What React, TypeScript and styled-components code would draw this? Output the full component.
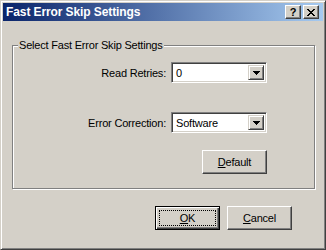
import React from 'react'
import styled, { createGlobalStyle } from 'styled-components'

const GlobalStyle = createGlobalStyle`
  html, body {
    margin: 0;
    padding: 0;
    background: #d4d0c8;
  }
  body {
    font-family: "Liberation Sans", Arial, sans-serif;
    font-size: 11px;
    letter-spacing: -0.2px;
    color: #000;
  }
`

const CLOSE_GLYPH = [
  'XX....XX',
  '.XX..XX.',
  '..XXXX..',
  '...XX...',
  '..XXXX..',
  '.XX..XX.',
  'XX....XX',
]

const CloseIcon: React.FC = () => (
  <svg width="8" height="7" viewBox="0 0 8 7" shapeRendering="crispEdges">
    { CLOSE_GLYPH.map((row, y) =>
      row.split('').map((c, x) =>
        c === 'X' ? <rect key={ `${x}-${y}` } x={ x } y={ y } width="1" height="1" fill="#000" /> : null
      )
    ) }
  </svg>
)

const ArrowIcon: React.FC = () => (
  <svg width="7" height="4" viewBox="0 0 7 4" shapeRendering="crispEdges">
    <rect x="0" y="0" width="7" height="1" fill="#000" />
    <rect x="1" y="1" width="5" height="1" fill="#000" />
    <rect x="2" y="2" width="3" height="1" fill="#000" />
    <rect x="3" y="3" width="1" height="1" fill="#000" />
  </svg>
)

const ComboBox: React.FC<{ value: string }> = ({ value }) => (
  <Combo>
    <ComboText>{ value }</ComboText>
    <DropButton>
      <ArrowIcon />
    </DropButton>
  </Combo>
)

const App: React.FC = () => {
  return (
    <>
      <GlobalStyle />
      <Window>
        <TitleBar>
          <Title>Fast Error Skip Settings</Title>
          <CaptionButton>
            <HelpGlyph>?</HelpGlyph>
          </CaptionButton>
          <CaptionButton $gap={ 2 }>
            <CloseIcon />
          </CaptionButton>
        </TitleBar>
        <Client>
          <GroupBox>
            <Legend>Select Fast Error Skip Settings</Legend>
            <Field $top={ 0 }>
              <Label>Read Retries:</Label>
              <ComboBox value="0" />
            </Field>
            <Field $top={ 29 }>
              <Label>Error Correction:</Label>
              <ComboBox value="Software" />
            </Field>
            <DefaultRow>
              <PushButton><u>D</u>efault</PushButton>
            </DefaultRow>
          </GroupBox>
          <ButtonRow>
            <PushButton $default>
              <FocusRing />
              <u>O</u>K
            </PushButton>
            <PushButton><u>C</u>ancel</PushButton>
          </ButtonRow>
        </Client>
      </Window>
    </>
  )
}

const Window = styled.div`
  box-sizing: border-box;
  width: 326px;
  height: 250px;
  display: flex;
  flex-direction: column;
  padding: 2px;
  background: #d4d0c8;
  border: 1px solid;
  border-color: #d4d0c8 #404040 #404040 #d4d0c8;
  box-shadow: inset 1px 1px 0 #fff, inset -1px -1px 0 #808080;
`

const TitleBar = styled.div`
  height: 18px;
  flex-shrink: 0;
  display: flex;
  align-items: center;
  padding: 0 4px 0 3px;
  background: linear-gradient(to right, #0a246a, #a6caf0);
`

const Title = styled.div`
  flex: 1;
  color: #fff;
  font-weight: bold;
  font-size: 12px;
  letter-spacing: -0.1px;
  white-space: nowrap;
`

const CaptionButton = styled.div<{ $gap?: number }>`
  box-sizing: border-box;
  width: 16px;
  height: 14px;
  margin-left: ${ p => p.$gap ?? 0 }px;
  display: flex;
  align-items: center;
  justify-content: center;
  background: #d4d0c8;
  border: 1px solid;
  border-color: #fff #404040 #404040 #fff;
  box-shadow: inset -1px -1px 0 #808080;
`

const HelpGlyph = styled.span`
  font-weight: bold;
  font-size: 11px;
  line-height: 11px;
  margin-top: 1px;
`

const Client = styled.div`
  flex: 1;
  display: flex;
  flex-direction: column;
  padding: 24px 8px 0 9px;
`

const GroupBox = styled.div`
  position: relative;
  box-sizing: border-box;
  height: 144px;
  display: flex;
  flex-direction: column;
  align-items: flex-end;
  padding: 16px 47px 0 0;
  border: 1px solid #808080;
  box-shadow: 1px 1px 0 #fff, inset 1px 1px 0 #fff;
`

const Legend = styled.span`
  position: absolute;
  top: -7px;
  left: 5px;
  padding: 0 1px;
  line-height: 13px;
  background: #d4d0c8;
  white-space: nowrap;
`

const Field = styled.div<{ $top: number }>`
  display: flex;
  align-items: center;
  gap: 5px;
  margin-top: ${ p => p.$top }px;
`

const Label = styled.span`
  white-space: nowrap;
`

const Combo = styled.div`
  box-sizing: border-box;
  width: 96px;
  height: 21px;
  display: flex;
  padding: 2px;
  background: #fff;
  border: 1px solid;
  border-color: #808080 #fff #fff #808080;
  box-shadow: inset 1px 1px 0 #404040, inset -1px -1px 0 #d4d0c8;
`

const ComboText = styled.span`
  flex: 1;
  padding-left: 2px;
  line-height: 17px;
`

const DropButton = styled.div`
  box-sizing: border-box;
  width: 16px;
  display: flex;
  align-items: center;
  justify-content: center;
  background: #d4d0c8;
  border: 1px solid;
  border-color: #d4d0c8 #404040 #404040 #d4d0c8;
  box-shadow: inset 1px 1px 0 #fff, inset -1px -1px 0 #808080;
`

const DefaultRow = styled.div`
  margin-top: 17px;
`

const ButtonRow = styled.div`
  display: flex;
  justify-content: flex-end;
  gap: 7px;
  margin-top: 17px;
  padding-right: 23px;
`

const PushButton = styled.div<{ $default?: boolean }>`
  position: relative;
  box-sizing: border-box;
  width: 65px;
  height: 24px;
  display: flex;
  align-items: center;
  justify-content: center;
  background: #d4d0c8;
  border: 1px solid;
  border-color: ${ p => p.$default ? '#000' : '#fff #404040 #404040 #fff' };
  box-shadow: ${ p => p.$default
    ? 'inset 1px 1px 0 #fff, inset -1px -1px 0 #404040, inset -2px -2px 0 #808080'
    : 'inset -1px -1px 0 #808080' };
`

const FocusRing = styled.span`
  position: absolute;
  inset: 3px;
  border: 1px dotted #000;
`

export default App
